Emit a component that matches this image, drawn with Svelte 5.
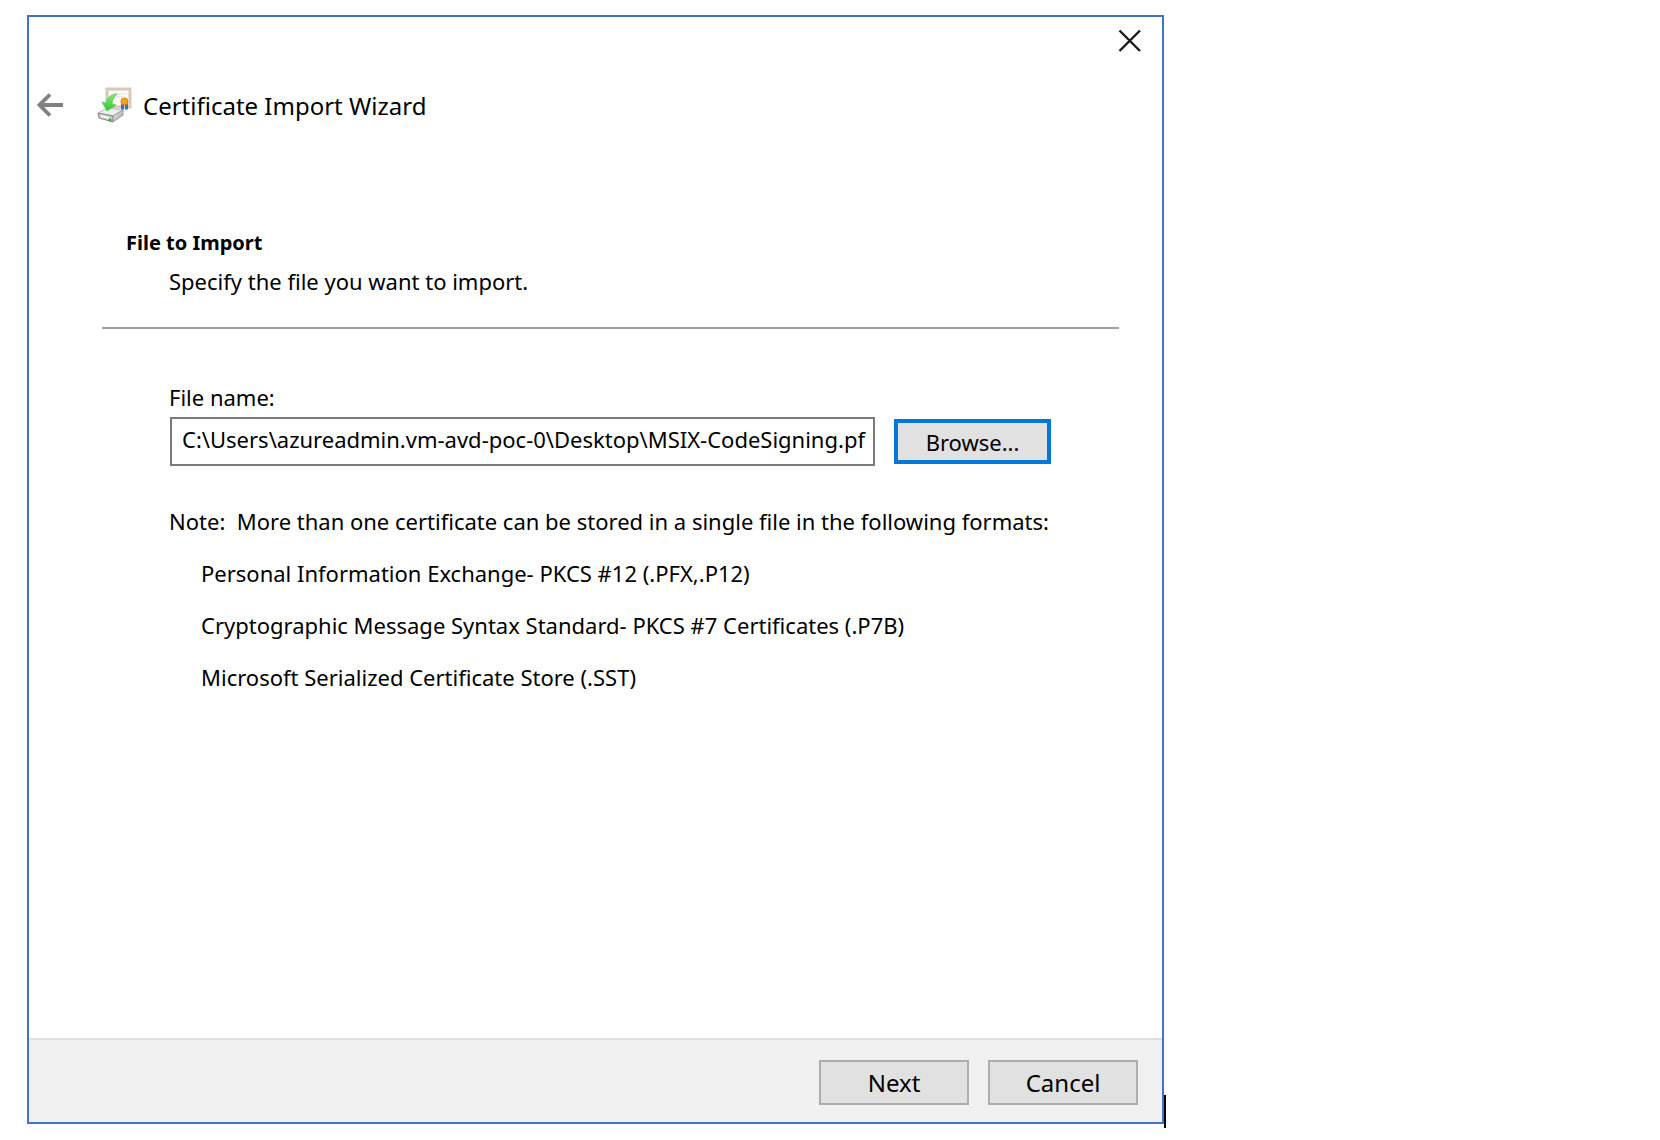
<script lang="ts">
	let fileName = $state('C:\\Users\\azureadmin.vm-avd-poc-0\\Desktop\\MSIX-CodeSigning.pf');

	const formats = [
		'Personal Information Exchange- PKCS #12 (.PFX,.P12)',
		'Cryptographic Message Syntax Standard- PKCS #7 Certificates (.P7B)',
		'Microsoft Serialized Certificate Store (.SST)'
	];
</script>

<div class="page">
	<main class="dialog">
		<div class="titlebar">
			<button class="icon-button" aria-label="Close">
				<svg width="24" height="24" viewBox="0 0 24 24">
					<path d="M1.5 1.5 22 22M22 1.5 1.5 22" stroke="#1a1a1a" stroke-width="2.4" fill="none" />
				</svg>
			</button>
		</div>

		<header>
			<button class="icon-button" aria-label="Back">
				<svg width="27" height="24" viewBox="0 0 27 24">
					<path d="M26 12H3M13 1.5 2.5 12 13 22.5" stroke="#808080" stroke-width="3.8" fill="none" />
				</svg>
			</button>
			<svg class="wizard-icon" width="36" height="36" viewBox="0 0 36 36">
				<defs>
					<linearGradient id="arrow" x1="0" y1="0" x2="0" y2="1">
						<stop offset="0" stop-color="#8be77a" />
						<stop offset="1" stop-color="#2fc436" />
					</linearGradient>
					<linearGradient id="drive" x1="0" y1="0" x2="1" y2="1">
						<stop offset="0" stop-color="#f3f3f3" />
						<stop offset="1" stop-color="#9b9b9b" />
					</linearGradient>
				</defs>
				<rect x="10" y="2" width="23" height="18" fill="#fbfaf7" stroke="#d8cabb" stroke-width="3" />
				<path d="M18 7h11M17 10h10" stroke="#e2e3e2" />
				<path d="m1 26 10-5 15 2-10 6z" fill="#efefef" stroke="#bdbdbd" />
				<path d="m1 26 15 3v6L2 31z" fill="#c9c9c9" stroke="#888" />
				<path d="m16 29 10-6v5l-10 7z" fill="url(#drive)" stroke="#999" />
				<path d="m4 29 8 2" stroke="#f7f7f7" stroke-width="2" />
				<circle cx="13" cy="33" r="1.5" fill="#28b52b" />
				<path
					d="M20 7c-5 0-10 3-11 9l-4-1 5 9 9-6-4-1c0-4 2-7 5-10z"
					fill="url(#arrow)"
					stroke="#65d460"
				/>
				<path d="M24 17h3v5l-1 1-2-1zM28 17h3v5l-2 1-1-1z" fill="#2878cc" />
				<circle cx="27.5" cy="14.5" r="3.5" fill="#f2a51d" stroke="#c98114" />
			</svg>
			<h1>Certificate Import Wizard</h1>
		</header>

		<section class="step">
			<h2>File to Import</h2>
			<p>Specify the file you want to import.</p>
		</section>
		<hr />

		<section class="content">
			<label for="file-name">File name:</label>
			<div class="file-row">
				<input id="file-name" type="text" spellcheck="false" bind:value={fileName} />
				<button class="browse">Browse...</button>
			</div>
			<p class="note">Note:&nbsp; More than one certificate can be stored in a single file in the following formats:</p>
			<ul>
				{#each formats as format}
					<li>{format}</li>
				{/each}
			</ul>
		</section>

		<footer>
			<button>Next</button>
			<button>Cancel</button>
		</footer>
	</main>
	<span class="caret"></span>
</div>

<style>
	:global(body) {
		margin: 0;
		background: #fff;
	}

	.page {
		box-sizing: border-box;
		display: flex;
		min-height: 100vh;
		padding: 15px 27px 12px;
		font-family: 'Noto Sans', sans-serif;
		font-size: 22px;
		line-height: 30px;
		color: #000;
	}

	.dialog {
		box-sizing: border-box;
		display: flex;
		flex-direction: column;
		width: 70.8%;
		margin-bottom: 4px;
		border: 2px solid #4472c4;
	}

	.caret {
		align-self: flex-end;
		width: 2px;
		height: 33px;
		background: #000;
	}

	h1,
	h2,
	p,
	ul {
		margin: 0;
		padding: 0;
		font-size: inherit;
		font-weight: 400;
	}

	button,
	input {
		box-sizing: border-box;
		font: inherit;
		color: inherit;
	}

	button {
		width: 150px;
		height: 45px;
		padding: 0;
		border: 2px solid #adadad;
		background: #e1e1e1;
	}

	.icon-button {
		display: flex;
		width: auto;
		height: auto;
		border: none;
		background: none;
	}

	.titlebar {
		display: flex;
		justify-content: flex-end;
		padding: 12px 20px 0;
	}

	header {
		display: flex;
		align-items: center;
		padding: 34px 8px 0;
	}

	header h1 {
		padding: 2px 0 0 10px;
		font-size: 24px;
	}

	.wizard-icon {
		margin-left: 33px;
	}

	.step {
		padding: 105px 97px 0;
	}

	.step h2 {
		font-size: 20px;
		font-weight: 700;
	}

	.step p {
		padding: 8px 43px 0;
	}

	hr {
		width: auto;
		height: 2px;
		margin: 31px 43px 0 73px;
		border: none;
		background: #a0a0a0;
	}

	.content {
		flex: 1;
		padding: 53px 111px 24px 140px;
	}

	label {
		display: block;
	}

	.file-row {
		display: flex;
		align-items: center;
		gap: 19px;
		margin: 5px 0 40px 1px;
	}

	.file-row input {
		flex: 1;
		min-width: 0;
		height: 49px;
		padding: 0 5px 6px 10px;
		border: 2px solid #7a7a7a;
		border-radius: 0;
		background: #fff;
		outline: none;
	}

	.browse {
		width: 157px;
		border: 4px solid #0078d7;
	}

	ul {
		display: flex;
		flex-direction: column;
		gap: 22px;
		padding: 22px 32px 0;
		list-style: none;
	}

	footer {
		display: flex;
		justify-content: flex-end;
		gap: 19px;
		padding: 20px 24px 17px;
		border-top: 2px solid #dfdfdf;
		background: #f0f0f0;
		font-size: 24px;
	}
</style>
